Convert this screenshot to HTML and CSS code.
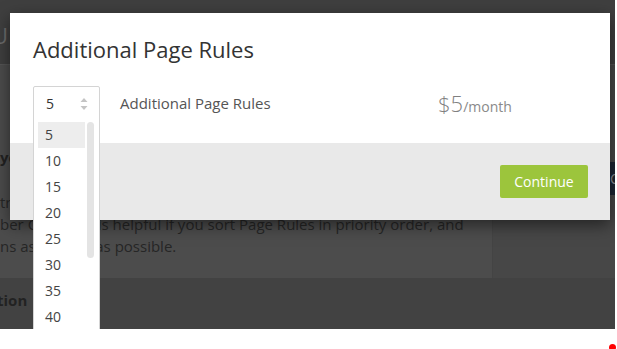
FILE: index.html
```html
<!DOCTYPE html>
<html lang="en">
<head>
    <meta charset="UTF-8">
    <meta name="viewport" content="width=device-width, initial-scale=1.0">
    <title>Additional Page Rules</title>
    <link rel="stylesheet" href="styles.css">
</head>
<body>
    <div class="screen">
        <div class="page">
            <div class="topbar"><span class="topbar-mark">U</span></div>
            <div class="page-body">
                <div class="page-main">
                    <p class="bg-heading">you</p>
                    <p class="bg-line bg-gap">tr</p>
                    <p class="bg-line">ber One, so it is helpful if you sort Page Rules in priority order, and</p>
                    <p class="bg-line">ns as specific as possible.</p>
                </div>
                <div class="page-side">
                    <div class="side-btn">C</div>
                </div>
            </div>
            <div class="page-band"><span>tion</span></div>

            <div class="modal">
                <div class="modal-head">
                    <h2 class="modal-title">Additional Page Rules</h2>
                    <div class="modal-row">
                        <div class="row-select-space"></div>
                        <div class="row-label">Additional Page Rules</div>
                        <div class="row-price"><span class="price-num">$5</span><span class="price-unit">/month</span></div>
                    </div>
                </div>
                <div class="modal-foot">
                    <button class="btn-continue">Continue</button>
                </div>

                <div class="select-box">
                    <div class="select-head">
                        <span>5</span>
                        <svg class="select-arrows" width="8" height="12" viewBox="0 0 8 12">
                            <path d="M4 0 L7.5 4 L0.5 4 Z" fill="#c4c4c4"/>
                            <path d="M4 12 L7.5 8 L0.5 8 Z" fill="#c4c4c4"/>
                        </svg>
                    </div>
                    <div class="select-list">
                        <ul class="option-list">
                            <li class="option selected">5</li>
                            <li class="option">10</li>
                            <li class="option">15</li>
                            <li class="option">20</li>
                            <li class="option">25</li>
                            <li class="option">30</li>
                            <li class="option">35</li>
                            <li class="option">40</li>
                        </ul>
                        <div class="list-scroll"></div>
                    </div>
                </div>
            </div>
        </div>
        <div class="bottom-strip"><span class="rec-dot"></span></div>
    </div>
</body>
</html>
```

FILE: styles.css
```css
body {
    margin: 0;
    background: #fff;
    font-family: 'Open Sans', 'Liberation Sans', sans-serif;
    overflow: hidden;
}
.screen {
    width: 617px;
    height: 349px;
    overflow: hidden;
}
.page {
    position: relative;
    width: 615px;
    height: 329px;
    background: #4a4a4a;
    overflow: hidden;
}
.topbar {
    height: 64px;
    background: #3f3f3f;
    border-bottom: 1px solid #545454;
    overflow: hidden;
}
.topbar-mark {
    display: block;
    margin: 22px 0 0 -8px;
    font-size: 22px;
    line-height: 26px;
    color: #6c6c6c;
}
.page-body {
    display: flex;
    height: 213px;
}
.page-main {
    flex-shrink: 0;
    width: 493px;
    border-right: 1px solid #444;
    background: #4c4c4c;
    padding-top: 81px;
    box-sizing: border-box;
    overflow: hidden;
    white-space: nowrap;
}
.bg-heading {
    margin: 0;
    font-size: 15px;
    font-weight: bold;
    line-height: 22px;
    color: #222;
}
.bg-line {
    margin: 0;
    font-size: 15px;
    line-height: 22px;
    color: #262626;
}
.bg-gap {
    margin-top: 23px;
}
.page-side {
    flex: 1;
    min-width: 0;
    background: #474747;
    padding-top: 97px;
    overflow: hidden;
}
.side-btn {
    margin-left: 115px;
    height: 33px;
    width: 40px;
    background: #1c2633;
    color: #8a8f96;
    font-size: 14px;
    line-height: 33px;
    padding-left: 2px;
}
.page-band {
    height: 51px;
    background: #424242;
    padding-top: 11px;
    box-sizing: border-box;
    font-size: 15px;
    font-weight: bold;
    line-height: 22px;
    color: #222;
}
.page-band span {
    margin-left: -3px;
}

/* modal */
.modal {
    position: absolute;
    left: 10px;
    top: 13px;
    width: 600px;
    box-shadow: 0 5px 15px rgba(0, 0, 0, 0.5);
}
.modal-head {
    background: #fff;
    padding: 21px 23px 23px;
    height: 130px;
    box-sizing: border-box;
}
.modal-title {
    margin: 0 0 22px;
    font-size: 22px;
    font-weight: normal;
    line-height: 30px;
    color: #333;
}
.modal-row {
    display: flex;
    align-items: center;
    height: 34px;
}
.row-select-space {
    width: 66px;
}
.row-label {
    width: 318px;
    margin-left: 21px;
    font-size: 15px;
    color: #555;
}
.row-price {
    color: #808080;
}
.price-num {
    font-size: 22px;
    font-weight: 300;
}
.price-unit {
    font-size: 14px;
    color: #8a8a8a;
}
.modal-foot {
    background: #e9e9e9;
    height: 77px;
    padding: 22px 22px 0;
    box-sizing: border-box;
    display: flex;
    justify-content: flex-end;
}
.btn-continue {
    width: 88px;
    height: 33px;
    border: none;
    border-radius: 2px;
    background: #9cc53c;
    color: #fff;
    font-family: 'Open Sans', 'Liberation Sans', sans-serif;
    font-size: 14px;
}

/* open select */
.select-box {
    position: absolute;
    left: 23px;
    top: 73px;
    width: 67px;
    height: 260px;
    background: #fff;
    border: 1px solid #d4d4d4;
    border-radius: 2px;
    box-sizing: border-box;
}
.select-head {
    height: 33px;
    display: flex;
    align-items: center;
    justify-content: space-between;
    padding: 0 11px 0 12px;
    font-size: 14px;
    color: #333;
}
.select-arrows {
    margin-top: 1px;
}
.select-list {
    display: flex;
    align-items: flex-start;
    padding: 2px 4px 0;
}
.option-list {
    list-style: none;
    margin: 0;
    padding: 0;
    width: 47px;
}
.option {
    height: 26px;
    line-height: 26px;
    padding-left: 7px;
    font-size: 14px;
    color: #444;
}
.option.selected {
    background: #ededed;
}
.list-scroll {
    width: 7px;
    height: 136px;
    margin-left: 2px;
    background: #e4e4e4;
    border-radius: 4px;
}

.bottom-strip {
    height: 20px;
    display: flex;
    justify-content: flex-end;
    align-items: flex-end;
}
.rec-dot {
    width: 7px;
    height: 7px;
    margin: 0 1px -2px 0;
    border-radius: 50%;
    background: #f00;
}
```
